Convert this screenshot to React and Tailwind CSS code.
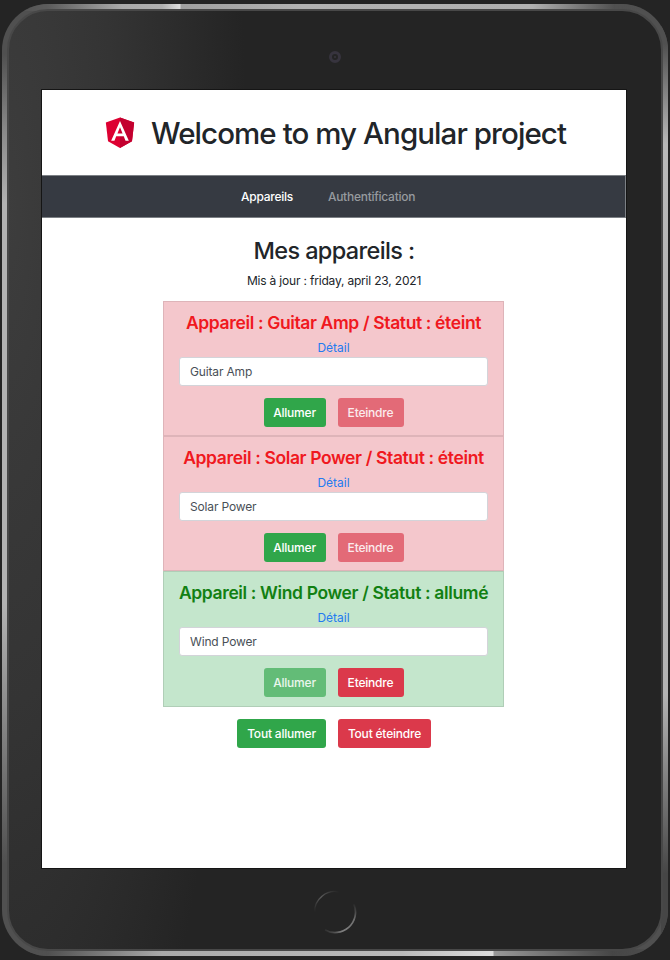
const buttonTones = {
  success: 'bg-[#30a64a]',
  danger: 'bg-[#db394b]',
};

function Button({ tone, disabled, width, children }) {
  return (
    <button
      type="button"
      disabled={disabled}
      className={`flex h-[29px] items-center justify-center whitespace-nowrap rounded-[3px] text-xs font-[480] tracking-[-0.2px] text-white ${width} ${buttonTones[tone]} ${disabled ? 'opacity-65' : ''}`}
    >
      {children}
    </button>
  );
}

const devices = [
  { name: 'Guitar Amp', on: false },
  { name: 'Solar Power', on: false },
  { name: 'Wind Power', on: true },
];

function Device({ name, on }) {
  return (
    <li
      className={`border px-[15px] pt-[9px] ${on ? 'h-[136px] border-[#b0ceb7] bg-[#c4e6cc]' : 'h-[135px] border-[#deb4b9] bg-[#f4c7cc]'}`}
    >
      <h4 className={`flex h-6 items-center justify-center whitespace-nowrap text-[17.5px] font-[560] tracking-[-0.37px] ${on ? 'text-[#128012]' : 'text-[#f01820]'}`}>
        Appareil : {name} / Statut : {on ? 'allumé' : 'éteint'}
      </h4>
      <a className="mt-1 flex h-[18px] items-center justify-center text-xs text-[#237bf0]">Détail</a>
      <input
        type="text"
        defaultValue={name}
        className="block h-[29px] w-full rounded-[3px] border border-[#d3d4d9] bg-white px-[10px] text-xs tracking-[-0.16px] text-[#495057]"
      />
      <div className="mt-3 flex justify-center gap-3">
        <Button tone="success" disabled={on} width="w-[62px]">Allumer</Button>
        <Button tone="danger" disabled={!on} width="w-[66px]">Eteindre</Button>
      </div>
    </li>
  );
}

function AngularLogo() {
  return (
    <svg viewBox="0 0 250 250" className="mb-px size-[38px] shrink-0" aria-hidden="true">
      <path fill="#dd0031" d="M125 30 31.900 63.200l14.200 123.100L125 230l78.900-43.700 14.200-123.100z" />
      <path fill="#c3002f" d="M125 30v200l78.900-43.700 14.200-123.100z" />
      <path fill="#fff" d="M125 52.100 66.800 182.600h21.700l11.700-29.200h49.400l11.700 29.200H183zm17 83.300h-34l17-40.900z" />
    </svg>
  );
}

function HomeButton() {
  return (
    <svg viewBox="0 0 44 44" className="mt-[22px] size-11 shrink-0" fill="none" aria-hidden="true">
      <defs>
        <linearGradient id="home-top" x1="0" y1="1" x2="1" y2="0">
          <stop offset="0" stopColor="#555" stopOpacity="0" />
          <stop offset=".5" stopColor="#5c5c5c" />
          <stop offset="1" stopColor="#555" stopOpacity="0" />
        </linearGradient>
        <linearGradient id="home-bottom" x1="0" y1="1" x2="1" y2="0">
          <stop offset="0" stopColor="#777" stopOpacity="0" />
          <stop offset=".3" stopColor="#808080" />
          <stop offset=".7" stopColor="#707070" />
          <stop offset="1" stopColor="#777" stopOpacity="0" />
        </linearGradient>
      </defs>
      <path d="M1.500 22A20.500 20.500 0 0 1 26 1.900" stroke="url(#home-top)" strokeWidth="1.300" />
      <path d="M41 14.200A20.500 20.500 0 0 1 12 39.900" stroke="url(#home-bottom)" strokeWidth="1.700" />
    </svg>
  );
}

function Screen() {
  return (
    <main className="flex h-[778px] w-[584px] flex-col bg-white text-[#212529] shadow-[0_0_0_1px_#151515]">
      <header className="flex h-[85px] items-center pl-[59px]">
        <AngularLogo />
        <h1 className="ml-3 mt-0.5 whitespace-nowrap text-[29.5px] font-[550] tracking-[-0.93px]">Welcome to my Angular project</h1>
      </header>
      <nav className="flex h-[43px] items-center gap-[35px] border-y border-r border-[#7c8085] bg-[#363a42] pl-[199px] text-xs font-[480] tracking-[-0.26px]">
        <a className="text-white">Appareils</a>
        <a className="text-[#969a9f]">Authentification</a>
      </nav>
      <h2 className="mt-[18px] flex h-[30px] items-center justify-center text-[23.5px] font-[550] tracking-[-0.64px]">Mes appareils :</h2>
      <p className="mt-[6px] flex h-[18px] items-center justify-center text-xs tracking-[-0.19px]">Mis à jour : friday, april 23, 2021</p>
      <ul className="ml-[121px] mt-[11px] w-[341px]">
        {devices.map((device) => <Device key={device.name} {...device} />)}
      </ul>
      <div className="mt-3 flex justify-center gap-3">
        <Button tone="success" width="w-[89px]">Tout allumer</Button>
        <Button tone="danger" width="w-[93px]">Tout éteindre</Button>
      </div>
    </main>
  );
}

export default function App() {
  return (
    <div className="h-[960px] w-[670px] overflow-hidden bg-[#242424] pl-[2px] pt-1 font-[Inter,'Liberation_Sans',sans-serif]">
      <div className="flex h-[952px] w-[666px] flex-col rounded-[46px] bg-[#505050] bg-[linear-gradient(180deg,#505050_50px,#888_125px,#b2b2b2_200px,#b2b2b2_600px,#505050_860px)]">
        <div className="flex h-[952px] flex-col rounded-[46px] bg-[linear-gradient(180deg,#505050_40px,#b8b8b8_140px,#b4b4b4_690px,#464646_870px)] bg-size-[7px_100%] bg-right bg-no-repeat">
          <div className="h-[952px] rounded-[46px] bg-[linear-gradient(90deg,#58585800_0px,#5c5c5c_46px,#aaa_120px,#b0b0b0_160px,#dedede_178px,#a0a0a0_179px,#b2b2b2_300px,#b0b0b0_530px,#505050_612px,#50505000_666px),linear-gradient(90deg,#50505000_0px,#505050_46px,#aaa_160px,#bbb_400px,#ddd_491px,#999_492px,#464646_610px,#46464600_666px)] bg-size-[100%_7px] bg-position-[top,bottom] bg-no-repeat p-[5px]">
            <div className="flex h-[942px] w-[656px] flex-col items-center rounded-[41px] border-2 border-[#484848] bg-[radial-gradient(ellipse_240px_1100px_at_0_200px,#3d3d3d,#343434_45%,#242424)] bg-origin-border pt-10">
              <div className="flex size-3 shrink-0 items-center justify-center rounded-full border-[3px] border-[#37343e]">
                <div className="size-0.5 rounded-full bg-[#37343e]" />
              </div>
              <div className="mr-[2px] mt-[27px]"><Screen /></div>
              <HomeButton />
            </div>
          </div>
        </div>
      </div>
    </div>
  );
}
